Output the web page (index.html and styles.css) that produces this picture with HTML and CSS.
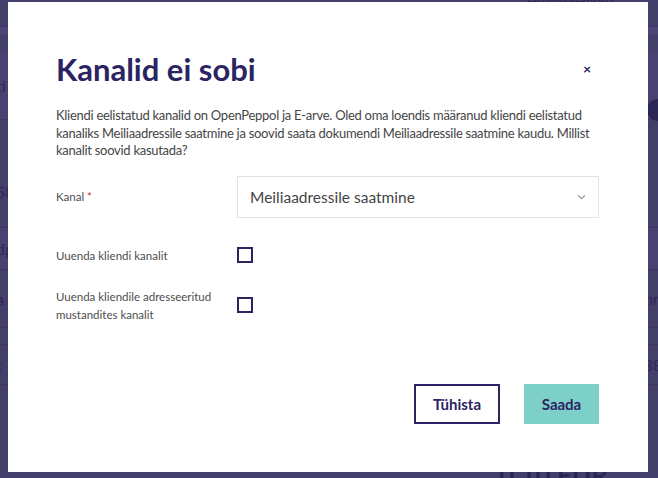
FILE: index.html
```html
<!DOCTYPE html>
<html lang="et">
<head>
<meta charset="utf-8">
<title>Kanalid ei sobi</title>
<link rel="stylesheet" href="styles.css">
</head>
<body>
<div class="page" aria-hidden="true">
  <div class="bg-row r-top"><span class="topbar-text">Lokalisatsioon</span></div>
  <div class="bg-row r-strip"></div>
  <div class="bg-row r-gap"></div>
  <div class="bg-row r-band"><span class="bg-left">ti</span><span class="bg-circle"></span></div>
  <div class="bg-row r-tall"><span class="bg-left low">58</span></div>
  <div class="bg-row r-band2"><span class="bg-left">dp</span></div>
  <div class="bg-row r-mid"><span class="bg-left">a</span><span class="bg-right">nn</span></div>
  <div class="bg-row r-thin"></div>
  <div class="bg-row r-mid2"><span class="bg-left">t</span><span class="bg-right">88</span></div>
  <div class="bg-row r-rest"></div>
  <div class="bg-footer"><span class="bg-amount">0.10 EUR</span></div>
</div>

<div class="modal" role="dialog" aria-labelledby="modal-title">
  <header class="modal-head">
    <h1 id="modal-title" class="modal-title">Kanalid ei sobi</h1>
    <button class="close" aria-label="Sulge">&#215;</button>
  </header>
  <p class="modal-text">Kliendi eelistatud kanalid on OpenPeppol ja E-arve. Oled oma loendis määranud kliendi eelistatud kanaliks Meiliaadressile saatmine ja soovid saata dokumendi Meiliaadressile saatmine kaudu. Millist kanalit soovid kasutada?</p>

  <div class="form-row row-select">
    <label class="form-label" for="kanal">Kanal <span class="req">*</span></label>
    <div class="select" id="kanal">
      <span class="select-value">Meiliaadressile saatmine</span>
      <svg class="chevron" width="9" height="6" viewBox="0 0 9 6"><path d="M1 1.2 L4.5 4.6 L8 1.2" fill="none" stroke="#9a9a9a" stroke-width="1.3"/></svg>
    </div>
  </div>

  <div class="form-row row-check1">
    <span class="form-label">Uuenda kliendi kanalit</span>
    <span class="checkbox"></span>
  </div>

  <div class="form-row row-check2">
    <span class="form-label">Uuenda kliendile adresseeritud mustandites kanalit</span>
    <span class="checkbox"></span>
  </div>

  <div class="actions">
    <button class="btn btn-outline">Tühista</button>
    <button class="btn btn-primary">Saada</button>
  </div>
</div>
</body>
</html>
```

FILE: styles.css
```css
* { box-sizing: border-box; }
html, body { margin: 0; padding: 0; }
body {
  width: 658px;
  height: 478px;
  overflow: hidden;
  background: #433f6b;
  font-family: Lato, "Noto Sans", sans-serif;
  position: relative;
}

/* faint page behind the overlay */
.page { display: flex; flex-direction: column; height: 478px; color: #2e2a57; font-size: 16px; }
.bg-row { flex: none; display: flex; align-items: center; justify-content: space-between; border-bottom: 1px solid #3c3862; }
.r-top { height: 27px; justify-content: flex-end; align-items: flex-start; padding-right: 45px; }
.topbar-text { font-size: 14px; color: #2c2855; margin-top: -12px; }
.r-strip { height: 8px; background: #4b4675; border-bottom: 0; }
.r-gap { height: 17px; border-bottom: 0; }
.r-band { height: 68px; background: #47426f; align-items: center; }
.r-tall { height: 108px; align-items: flex-end; padding-bottom: 26px; }
.r-band2 { height: 42px; background: #47426f; }
.r-mid { height: 58px; }
.r-thin { height: 17px; }
.r-mid2 { height: 40px; }
.r-rest { height: 77px; border-bottom: 0; }
.bg-left { margin-left: -4px; }
.bg-right { margin-right: -4px; }
.bg-circle { width: 22px; height: 22px; border-radius: 50%; background: #2c2855; margin-right: -11px; align-self: flex-end; margin-bottom: -2px; }
.bg-footer { flex: 1; display: flex; justify-content: flex-end; padding-right: 50px; }
.bg-amount { font-size: 26px; font-weight: 700; color: #2a2654; line-height: 30px; margin-top: -2px; }

/* modal (overlay) */
.modal {
  position: absolute;
  left: 8px;
  top: 2px;
  width: 640px;
  height: 470px;
  background: #fff;
  padding: 48px 49px 48px 48px;
  display: flex;
  flex-direction: column;
}
.modal-head { display: flex; align-items: center; justify-content: space-between; height: 38px; }
.modal-title {
  margin: 0;
  font-size: 31px;
  font-weight: 700;
  color: #2b2463;
  line-height: 38px;
}
.close {
  border: 0;
  background: none;
  padding: 0;
  margin-right: 8px;
  font-size: 14px;
  line-height: 1;
  color: #2b2463;
  font-weight: 700;
  font-family: inherit;
}
.modal-text {
  margin: 19px 0 0;
  font-size: 13px;
  letter-spacing: -0.28px;
  line-height: 17.5px;
  color: #454545;
}

.form-row { display: flex; align-items: center; }
.form-label { width: 181px; flex: none; font-size: 11.5px; line-height: 18px; color: #4d4d4d; padding-right: 24px; }
.req { color: #c0392b; }
.row-select { margin-top: 16px; }
.select {
  flex: 1;
  height: 42px;
  border: 1px solid #e3e3e3;
  display: flex;
  align-items: center;
  justify-content: space-between;
  padding: 0 12px 0 12px;
}
.select-value { font-size: 15.5px; color: #444; }
.row-check1 { margin-top: 29px; }
.row-check2 { margin-top: 23px; }
.checkbox { width: 16px; height: 16px; border: 2px solid #2b2463; display: block; margin-top: -1px; }

.actions { margin-top: auto; display: flex; justify-content: flex-end; gap: 24px; }
.btn {
  height: 40px;
  font-family: inherit;
  font-size: 15px;
  font-weight: 700;
  color: #2b2463;
  cursor: pointer;
}
.btn-outline { width: 86px; background: #fff; border: 2px solid #2b2463; }
.btn-primary { width: 75px; background: #7dd0c8; border: 0; }
```
